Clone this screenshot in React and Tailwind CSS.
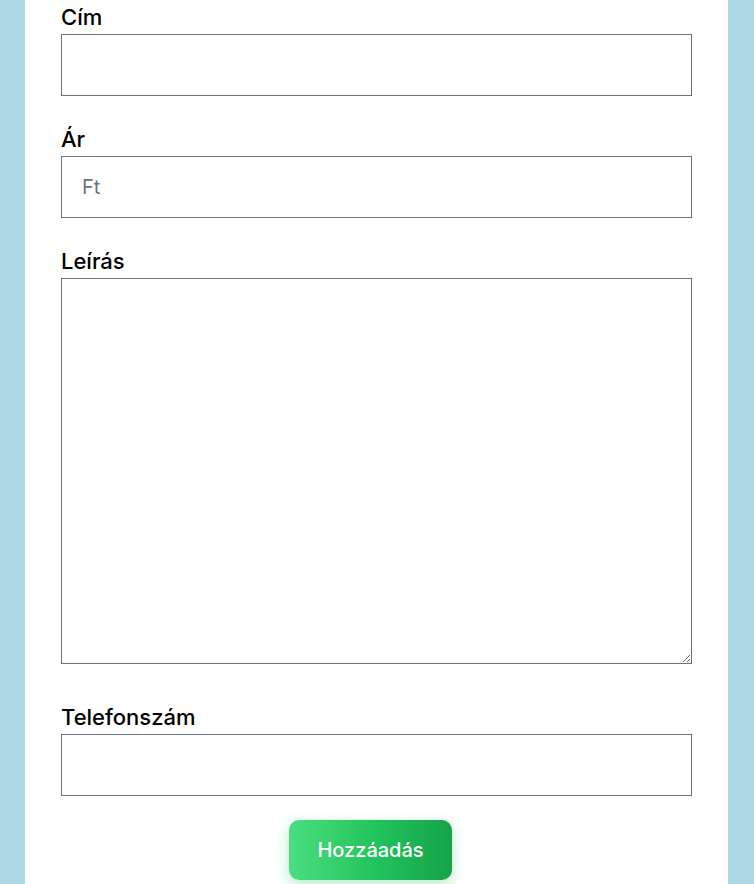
import React from 'react';

const fieldCls = 'block w-full h-[62px] border border-[#6b7280] bg-white px-5 text-xl text-[#111827] placeholder:text-[#6b7280] outline-none';
const labelCls = 'block text-[22px] leading-[22px] mb-[6px] font-medium text-black';

export default function App() {
  return (
    <div className="min-h-[884px] bg-[#add8e6] px-[25px] font-['Inter',sans-serif]">
      <div className="bg-white min-h-[884px] w-[703px] px-9 pt-[6px]">
        <label className={labelCls}>Cím</label>
        <input type="text" className={`${fieldCls} mb-8`} />

        <label className={labelCls}>Ár</label>
        <input type="text" placeholder="Ft" className={`${fieldCls} mb-8`} />

        <label className={labelCls}>Leírás</label>
        <textarea className="block w-full h-[386px] border border-[#6b7280] bg-white px-5 py-3 text-xl outline-none mb-[42px]" />

        <label className={labelCls}>Telefonszám</label>
        <input type="tel" className={`${fieldCls} mb-6`} />

        <div className="flex justify-center">
          <button className="mr-3 h-[60px] w-[163px] rounded-[10px] bg-gradient-to-r from-[#4ade80] via-[#22c55e] to-[#16a34a] text-white text-xl font-medium shadow-[0_4px_14px_rgba(34,197,94,0.35)]">
            Hozzáadás
          </button>
        </div>
      </div>
    </div>
  );
}
